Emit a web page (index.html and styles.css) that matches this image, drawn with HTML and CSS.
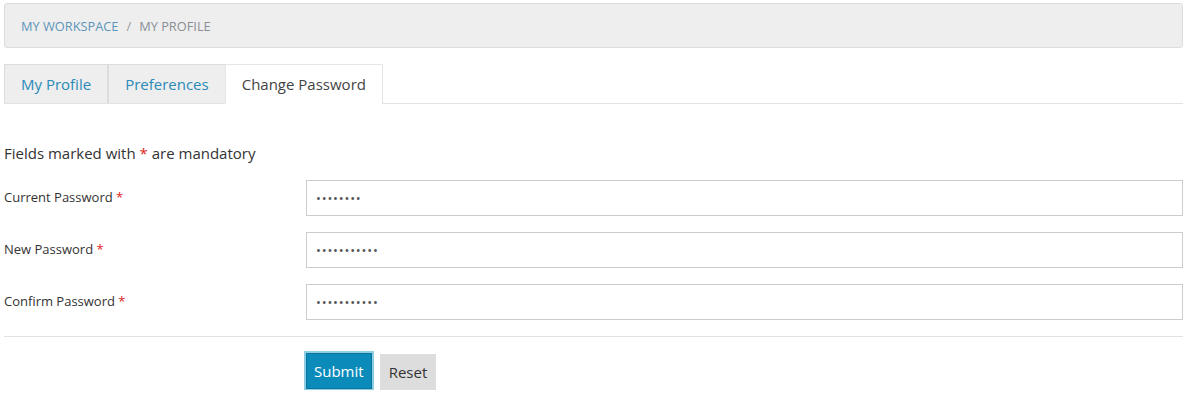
FILE: index.html
```html
<!DOCTYPE html>
<html>
<head>
<meta charset="utf-8">
<link rel="stylesheet" href="styles.css">
</head>
<body>
<div class="page">
  <div class="breadcrumb">
    <a class="crumb-link" href="#">My Workspace</a>
    <span class="crumb-sep">/</span>
    <span class="crumb-current">My Profile</span>
  </div>
  <div class="tabs">
    <a class="tab" href="#">My Profile</a>
    <a class="tab tab-mid" href="#">Preferences</a>
    <a class="tab active" href="#">Change Password</a>
  </div>
  <p class="note">Fields marked with <span class="req">*</span> are mandatory</p>
  <form class="form">
    <div class="row">
      <label class="label">Current Password <span class="req">*</span></label>
      <input class="input" type="password" value="abcdefgh">
    </div>
    <div class="row">
      <label class="label">New Password <span class="req">*</span></label>
      <input class="input" type="password" value="abcdefghijk">
    </div>
    <div class="row">
      <label class="label">Confirm Password <span class="req">*</span></label>
      <input class="input" type="password" value="abcdefghijk">
    </div>
    <div class="divider"></div>
    <div class="actions">
      <button type="button" class="btn btn-primary">Submit</button>
      <button type="button" class="btn btn-default">Reset</button>
    </div>
  </form>
</div>
</body>
</html>
```

FILE: styles.css
```css
* { box-sizing: border-box; }
html, body { margin: 0; padding: 0; background: #fff; }
body {
  font-family: "Open Sans", "Noto Sans", sans-serif;
  color: #333;
}
.page { padding: 3px 5px 0 4px; }

.breadcrumb {
  height: 45px;
  background: #eeeeee;
  border: 1px solid #dcdcdc;
  border-radius: 3px;
  display: flex;
  align-items: center;
  gap: 8px;
  padding-left: 16px;
  font-size: 12.8px;
  text-transform: uppercase;
}
.crumb-link { color: #5e95ba; text-decoration: none; }
.crumb-sep { color: #999; }
.crumb-current { color: #8a8f96; }

.tabs {
  margin-top: 16px;
  display: flex;
  border-bottom: 1px solid #e3e3e3;
  height: 40px;
}
.tab {
  display: flex;
  align-items: center;
  height: 39px;
  padding: 0 16px 1px;
  font-size: 15px;
  text-decoration: none;
  color: #2a8ab8;
  background: #eeeeee;
  border: 1px solid #dcdcdc;
  border-bottom: none;
}
.tab-mid { margin-right: -1px; }
.tab.active {
  background: #fff;
  color: #444;
  border-color: #e6e6e6;
  height: 40px;
}

.note {
  margin: 39px 0 0 0;
  font-size: 15px;
  line-height: 20px;
  color: #333;
}
.req { color: #e0231a; }

.form { margin-top: 17px; }
.row {
  display: flex;
  align-items: center;
  margin-bottom: 16px;
}
.label {
  width: 302px;
  flex: none;
  font-size: 13px;
  color: #333;
  padding-bottom: 2px;
}
.input {
  flex: 1;
  height: 36px;
  border: 1px solid #cccccc;
  padding: 0 9px;
  font-family: "Open Sans", "Noto Sans", sans-serif;
  font-size: 13px;
  color: #555;
  letter-spacing: 0.8px;
  outline: none;
}
.divider {
  height: 1px;
  background: #e2e2e2;
}
.actions {
  display: flex;
  gap: 8px;
  padding-left: 302px;
  margin-top: 16px;
}
.btn {
  font-family: "Open Sans", "Noto Sans", sans-serif;
  font-size: 15px;
  height: 36px;
  cursor: pointer;
}
.btn-primary {
  padding: 0 7px;
  background: #0a8bba;
  color: #fff;
  border: 1px solid #0a759d;
  box-shadow: 0 0 0 2px #8fcde2;
}
.btn-default {
  padding: 0 9px;
  margin-top: 1px;
  background: #dddddd;
  color: #333;
  border: none;
}
```
